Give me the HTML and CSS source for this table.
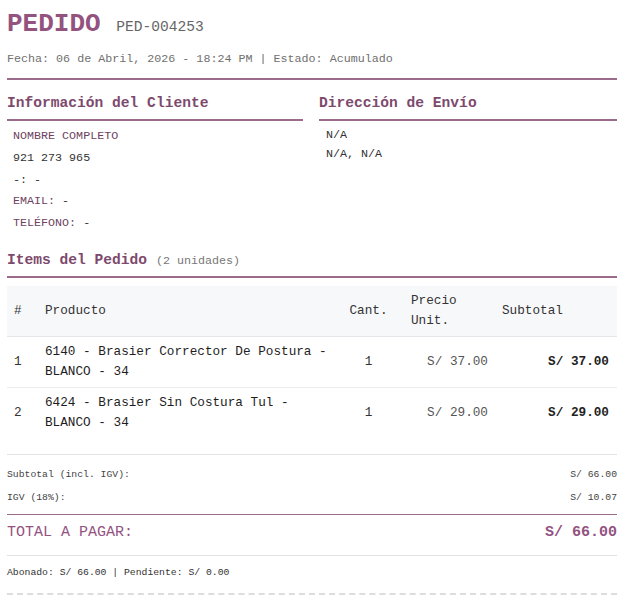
FILE: index.html
```html
<!DOCTYPE html>
<html lang="es">
<head>
<meta charset="utf-8">
<title>Pedido PED-004253</title>
<link rel="stylesheet" href="styles.css">
</head>
<body>
<div class="page">
  <header class="header">
    <h1 class="title">PEDIDO <span class="num">PED-004253</span></h1>
    <div class="meta">Fecha: 06 de Abril, 2026 - 18:24 PM | Estado: Acumulado</div>
  </header>

  <section class="cols">
    <div class="col">
      <h2 class="sec-title">Información del Cliente</h2>
      <div class="client">
        <div class="row lbl">NOMBRE COMPLETO</div>
        <div class="row">921 273 965</div>
        <div class="row">-: -</div>
        <div class="row"><span class="lbl">EMAIL:</span> -</div>
        <div class="row"><span class="lbl">TELÉFONO:</span> -</div>
      </div>
    </div>
    <div class="col">
      <h2 class="sec-title">Dirección de Envío</h2>
      <div class="addr">
        <div>N/A</div>
        <div>N/A, N/A</div>
      </div>
    </div>
  </section>

  <h2 class="sec-title items-title">Items del Pedido <span class="units">(2 unidades)</span></h2>

  <table class="items">
    <colgroup>
      <col class="c-n"><col class="c-p"><col class="c-q"><col class="c-u"><col class="c-s">
    </colgroup>
    <thead>
      <tr>
        <th>#</th>
        <th>Producto</th>
        <th class="center">Cant.</th>
        <th>Precio Unit.</th>
        <th>Subtotal</th>
      </tr>
    </thead>
    <tbody>
      <tr>
        <td>1</td>
        <td class="prod">6140 - Brasier Corrector De Postura - BLANCO - 34</td>
        <td class="center">1</td>
        <td class="right price">S/ 37.00</td>
        <td class="right sub">S/ 37.00</td>
      </tr>
      <tr>
        <td>2</td>
        <td class="prod">6424 - Brasier Sin Costura Tul - BLANCO - 34</td>
        <td class="center">1</td>
        <td class="right price">S/ 29.00</td>
        <td class="right sub">S/ 29.00</td>
      </tr>
    </tbody>
  </table>

  <section class="summary">
    <div class="sum-row"><span>Subtotal (incl. IGV):</span><span>S/ 66.00</span></div>
    <div class="sum-row"><span>IGV (18%):</span><span>S/ 10.07</span></div>
    <div class="total"><span>TOTAL A PAGAR:</span><span class="total-val">S/ 66.00</span></div>
  </section>

  <footer class="foot">Abonado: S/ 66.00 | Pendiente: S/ 0.00</footer>
</div>
</body>
</html>
```

FILE: styles.css
```css
* { box-sizing: border-box; }

html, body {
  margin: 0;
  padding: 0;
  background: #ffffff;
}

body {
  font-family: "Liberation Mono", "Courier New", monospace;
  color: #333333;
}

.page {
  width: 610px;
  margin-left: 7px;
}

.header {
  padding-top: 9px;
  padding-bottom: 11px;
  border-bottom: 2px solid #9c6b8c;
}

.title {
  margin: 0;
  font-size: 26px;
  line-height: 30px;
  font-weight: bold;
  color: #94527f;
}

.title .num {
  font-size: 14.6px;
  font-weight: normal;
  color: #666666;
}

.meta {
  margin-top: 9px;
  font-size: 11.7px;
  line-height: 16px;
  color: #707070;
}

.cols {
  display: grid;
  grid-template-columns: 296px 298px;
  column-gap: 16px;
  margin-top: 14px;
}

.sec-title {
  margin: 0;
  font-size: 14.6px;
  line-height: 18px;
  font-weight: bold;
  color: #7d4a6d;
  padding-bottom: 7px;
  border-bottom: 2px solid #9c6b8c;
}

.client {
  padding: 5px 0 0 6px;
  font-size: 11.7px;
  line-height: 21.75px;
  color: #333333;
}

.lbl {
  color: #6e3f5f;
}

.addr {
  padding: 5px 0 0 7px;
  font-size: 11.7px;
  line-height: 19px;
  color: #333333;
}

.items-title {
  margin-top: 16px;
  padding-bottom: 6px;
}

.units {
  font-size: 11.7px;
  font-weight: normal;
  color: #777777;
}

.items {
  width: 610px;
  margin-top: 8px;
  border-collapse: collapse;
  table-layout: fixed;
  font-size: 12.7px;
  line-height: 20px;
}

.c-n { width: 31px; }
.c-p { width: 295px; }
.c-q { width: 71px; }
.c-u { width: 91px; }
.c-s { width: 122px; }

.items th {
  background: #f7f8fa;
  font-weight: normal;
  text-align: left;
  color: #333333;
  padding: 5px 7px;
  border-bottom: 1px solid #e4e6ea;
  vertical-align: middle;
}

.items td {
  padding: 5px 7px;
  vertical-align: middle;
  color: #333333;
}

.items tbody tr + tr td {
  border-top: 1px solid #ececec;
}

.items td.prod {
  padding-right: 4px;
  color: #1e1e1e;
}

.items .center { text-align: center; }
.items .right { text-align: right; }
.items td.price { color: #555555; }
.items td.sub { font-weight: bold; color: #222222; padding-right: 8px; }

.summary {
  margin-top: 16px;
  border-top: 1px solid #e3e3e3;
  padding-top: 8px;
  border-bottom: 1px solid #e3e3e3;
}

.sum-row {
  display: flex;
  justify-content: space-between;
  font-size: 9.75px;
  line-height: 23px;
  color: #444444;
}

.total {
  display: flex;
  justify-content: space-between;
  align-items: center;
  margin-top: 5px;
  border-top: 1px solid #9c6b8c;
  padding: 8px 0 12px;
  line-height: 20px;
  color: #94527f;
  font-size: 15px;
}

.total-val {
  font-weight: bold;
}

.foot {
  padding: 10px 0 13px;
  font-size: 9.75px;
  line-height: 14px;
  color: #333333;
  border-bottom: 2px dashed #dddddd;
}
```
